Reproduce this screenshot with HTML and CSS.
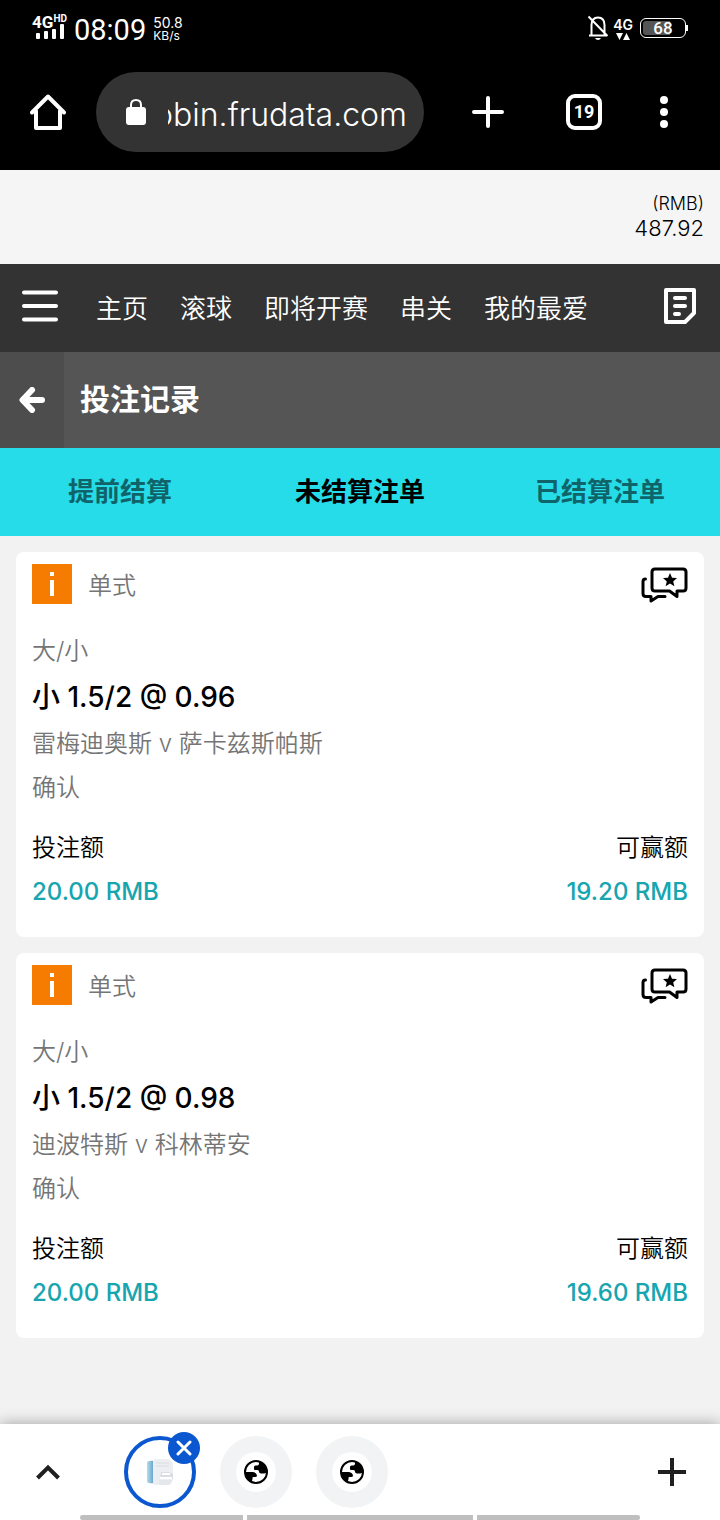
FILE: index.html
```html
<!DOCTYPE html>
<html lang="zh-CN">
<head>
<meta charset="utf-8">
<meta name="viewport" content="width=device-width, initial-scale=1">
<title>投注记录</title>
<link rel="stylesheet" href="styles.css">
</head>
<body>
<svg class="sprite" aria-hidden="true">
  <symbol id="chat" viewBox="0 0 48 36">
    <path d="M15 2H43Q46 2 46 5V21Q46 24 43 24H37V29.500L29.500 24H15Q12 24 12 21V5Q12 2 15 2Z" fill="none" stroke="#000" stroke-width="3" stroke-linejoin="round"/>
    <path d="M5.500 12Q3 12 3 14.500V26.500Q3 29.500 6 29.500H11V34L18 29.500H25" fill="none" stroke="#000" stroke-width="3" stroke-linecap="round" stroke-linejoin="round"/>
    <path d="M30 6l2 4.700 5 .4-3.800 3.300 1.200 4.900-4.400-2.700-4.400 2.700 1.200-4.900-3.800-3.300 5-.4z"/>
  </symbol>
  <symbol id="globe" viewBox="0 0 24 24">
    <circle cx="12" cy="12" r="11" fill="#fff" stroke="#000" stroke-width="2"/>
    <path d="M15 1.500V4Q14.500 5.500 13 5.500H11.500Q10 5.500 10 7V9Q10 10 11 10H13.500Q15 10 15 11.500Q15 13.500 17 13.500H20Q22 13 23 12C23 6.500 20 3 15 1.500Z"/>
    <path d="M1 12H9Q12.500 12.500 13 15.500Q13 17 11 17H9.500Q8.500 17 8.500 18V19Q8 20 8 22C4 20.500 1 17 1 12Z"/>
  </symbol>
</svg>

<header class="browser">
  <div class="status">
    <div class="status-side">
      <div class="signal">
        <span class="net">4G<sup>HD</sup></span>
        <svg width="30" height="15" viewBox="0 0 30 15" fill="#fff"><rect x="1" y="9" width="4" height="6" rx="1"/><rect x="9" y="7" width="4" height="8" rx="1"/><rect x="17" y="5" width="4" height="10" rx="1"/><rect x="25" y="0" width="4" height="15" rx="1"/></svg>
      </div>
      <time class="clock">08:09</time>
      <div class="speed"><span>50.8</span><span class="unit">KB/s</span></div>
    </div>
    <div class="status-side status-right">
      <svg width="22" height="26" viewBox="0 0 22 26" fill="none" stroke="#fff" stroke-width="2"><path d="M2 20.500H20M4.500 20V10Q4.500 2.500 11 2.500Q17.500 2.500 17.500 10V20M1.500 1.500L20.500 21"/><path d="M8 23h6q-1 2-3 2t-3-2z" fill="#fff" stroke="none"/></svg>
      <div class="data"><span>4G</span><svg width="14" height="7" viewBox="0 0 14 7" fill="#fff"><path d="M0 0h7L3.500 7zM7 7h7L10.500 0z"/></svg></div>
      <div class="battery"><span class="level">68</span></div>
    </div>
  </div>
  <div class="toolbar">
    <button class="tool home" aria-label="主页"><svg width="36" height="38" viewBox="0 0 36 38" fill="none" stroke="#fff" stroke-width="4" stroke-linecap="round" stroke-linejoin="round"><path d="M2 19.500L18 3.500L34 19.500M6 18V35H30V18" /></svg></button>
    <div class="address">
      <svg width="20" height="26" viewBox="0 0 20 26"><rect x="0" y="8" width="20" height="18" rx="3" fill="#fff"/><path d="M5 9V6Q5 1 10 1T15 6V9" fill="none" stroke="#fff" stroke-width="2"/></svg>
      <input class="url" type="text" aria-label="网址" value="obin.frudata.com" readonly>
    </div>
    <button class="tool" aria-label="新标签页"><svg width="32" height="32" viewBox="0 0 32 32" stroke="#fff" stroke-width="4" stroke-linecap="round"><path d="M16 2V30M2 16H30"/></svg></button>
    <button class="tool" aria-label="标签页"><span class="tab-count">19</span></button>
    <button class="tool more" aria-label="更多"><svg width="8" height="32" viewBox="0 0 8 32" fill="#fff"><circle cx="4" cy="4" r="4"/><circle cx="4" cy="16" r="4"/><circle cx="4" cy="28" r="4"/></svg></button>
  </div>
</header>

<div class="account"><span class="currency">(RMB)</span><span class="balance">487.92</span></div>

<nav class="nav">
  <button class="icon-button" aria-label="菜单"><svg width="36" height="32" viewBox="0 0 36 32" stroke="#fff" stroke-width="4" stroke-linecap="round"><path d="M2 2.500H34M2 16H34M2 29.500H34"/></svg></button>
  <div class="links"><a href="#">主页</a><a href="#">滚球</a><a href="#">即将开赛</a><a href="#">串关</a><a href="#">我的最爱</a></div>
  <button class="icon-button" aria-label="注单"><svg width="32" height="36" viewBox="0 0 32 36" fill="none" stroke="#fff" stroke-width="4"><path d="M2 2H30V25L21 34H2Z" stroke-linejoin="round"/><path d="M11 10H21M11 18H21M11 26H15" stroke-linecap="round"/></svg></button>
</nav>

<div class="heading">
  <button class="back" aria-label="返回"><svg width="26" height="26" viewBox="0 0 26 26" fill="none" stroke="#fff" stroke-width="6" stroke-linecap="round" stroke-linejoin="round"><path d="M13 3L3.500 13L13 23M4 13H23"/></svg></button>
  <h1>投注记录</h1>
</div>

<div class="tabs" role="tablist">
  <button role="tab" aria-selected="false">提前结算</button>
  <button role="tab" aria-selected="true">未结算注单</button>
  <button role="tab" aria-selected="false">已结算注单</button>
</div>

<main class="bets">
  <article class="card">
    <header class="card-head">
      <button class="info" aria-label="详情"><svg width="40" height="40" viewBox="0 0 40 40" fill="#fff"><path d="M18 8h4v4h-4zM18 16h4v16h-4z"/></svg></button>
      <span class="kind">单式</span>
      <button class="chat" aria-label="分享"><svg width="48" height="36"><use href="#chat"/></svg></button>
    </header>
    <p>大/小</p>
    <h2>小 1.5/2 @ 0.96</h2>
    <p>雷梅迪奥斯 v 萨卡兹斯帕斯</p>
    <p>确认</p>
    <dl class="amounts">
      <div><dt>投注额</dt><dd>20.00 RMB</dd></div>
      <div><dt>可赢额</dt><dd>19.20 RMB</dd></div>
    </dl>
  </article>
  <article class="card">
    <header class="card-head">
      <button class="info" aria-label="详情"><svg width="40" height="40" viewBox="0 0 40 40" fill="#fff"><path d="M18 8h4v4h-4zM18 16h4v16h-4z"/></svg></button>
      <span class="kind">单式</span>
      <button class="chat" aria-label="分享"><svg width="48" height="36"><use href="#chat"/></svg></button>
    </header>
    <p>大/小</p>
    <h2>小 1.5/2 @ 0.98</h2>
    <p>迪波特斯 v 科林蒂安</p>
    <p>确认</p>
    <dl class="amounts">
      <div><dt>投注额</dt><dd>20.00 RMB</dd></div>
      <div><dt>可赢额</dt><dd>19.60 RMB</dd></div>
    </dl>
  </article>
</main>

<footer class="bottom">
  <div class="bottom-row">
    <button class="tool expand" aria-label="展开"><svg width="24" height="16" viewBox="0 0 24 16" fill="none" stroke="#202020" stroke-width="4"><path d="M1.500 14L12 3.500L22.500 14"/></svg></button>
    <div class="sites">
      <div class="site-wrap">
        <button class="site current" aria-label="当前标签页"><svg width="28" height="28" viewBox="0 0 28 28">
          <defs><linearGradient id="spine"><stop offset="0" stop-color="#b9d9ea"/><stop offset="1" stop-color="#68aacf"/></linearGradient></defs>
          <rect x="4" y="1" width="23" height="26" rx="6" fill="#eceef1"/>
          <path d="M1 4Q4 2 7 3V25Q3 26 1 24Z" fill="url(#spine)"/>
          <path d="M10 5H23M10 8H23" stroke="#d8dde3"/>
          <path d="M15 14h8l4 2v5H14z" fill="#d9dde3"/><path d="M16 16h8M14 20h12" stroke="#fff" stroke-width="2"/><path d="M13 22h13l-2 5H13z" fill="#e4e7eb"/>
        </svg></button>
        <button class="close" aria-label="关闭"><svg width="16" height="16" viewBox="0 0 16 16" stroke="#fff" stroke-width="3" stroke-linecap="round"><path d="M2 2L14 14M14 2L2 14"/></svg></button>
      </div>
      <button class="site" aria-label="标签页 2"><span class="disc"><svg width="24" height="24"><use href="#globe"/></svg></span></button>
      <button class="site" aria-label="标签页 3"><span class="disc"><svg width="24" height="24"><use href="#globe"/></svg></span></button>
    </div>
    <button class="tool" aria-label="新建标签页"><svg width="28" height="28" viewBox="0 0 28 28" stroke="#202020" stroke-width="4"><path d="M14 0V28M0 14H28"/></svg></button>
  </div>
  <div class="gesture"><i></i><i></i><i></i></div>
</footer>
</body>
</html>
```
FILE: styles.css
```css
* { box-sizing: border-box; }
body {
  margin: 0;
  min-height: 100vh;
  display: flex;
  flex-direction: column;
  background: #f2f2f2;
  color: #000;
  font-family: Inter, "Noto Sans CJK SC", sans-serif;
  font-size: 24px;
}
button {
  display: flex;
  align-items: center;
  justify-content: center;
  padding: 0;
  border: 0;
  background: none;
  color: inherit;
  font: inherit;
}
svg { display: block; flex: none; }
.sprite { position: absolute; width: 0; height: 0; }
h1, h2, p, dl, dd { margin: 0; }

.browser { background: #000; color: #fff; }
.status {
  display: flex;
  justify-content: space-between;
  align-items: center;
  height: 56px;
  padding: 0 34px 0 32px;
}
.status-side { display: flex; align-items: center; gap: 7px; }
.signal { display: flex; flex-direction: column; align-items: center; width: 35px; padding-bottom: 4px; }
.signal svg { margin-top: -6px; }
.net { display: flex; font-family: Roboto, sans-serif; font-size: 17px; font-weight: 700; line-height: 16px; }
.net sup { font-size: 10px; line-height: 10px; }
.clock { padding-top: 4px; font-family: Roboto, sans-serif; font-size: 29px; line-height: 32px; }
.speed { display: flex; flex-direction: column; padding-top: 2px; font-size: 14px; line-height: 13px; }
.speed .unit { font-size: 12px; }
.status-right { gap: 4px; }
.data { display: flex; flex-direction: column; align-items: center; font-size: 14px; font-weight: 600; line-height: 16px; }
.battery {
  position: relative;
  width: 46px;
  height: 20px;
  margin-left: 3px;
  padding: 2px;
  border: 1px solid #fff;
  border-radius: 6px;
}
.battery::after {
  content: "";
  position: absolute;
  right: -3px;
  top: 6px;
  width: 2px;
  height: 6px;
  background: #fff;
}
.level {
  display: block;
  border-radius: 3px;
  background: linear-gradient(90deg, #555 68%, transparent 68%);
  font-family: Roboto, sans-serif;
  font-size: 17px;
  font-weight: 500;
  line-height: 14px;
  text-align: center;
}

.toolbar { display: flex; align-items: center; height: 114px; padding-bottom: 2px; }
.tool { flex: none; width: 96px; height: 80px; }
.toolbar .more { width: 64px; margin-right: 24px; }
.address {
  display: flex;
  align-items: center;
  gap: 22px;
  flex: 1;
  min-width: 0;
  height: 80px;
  margin-right: 16px;
  padding: 0 17px 0 30px;
  border-radius: 40px;
  background: #333;
}
.url {
  flex: 1;
  min-width: 0;
  height: 48px;
  padding: 4px 0 0;
  border: 0;
  outline: 0;
  background: none;
  color: #fff;
  direction: rtl;
  font-family: Inter, sans-serif;
  font-size: 32px;
  font-weight: 300;
}
.tab-count {
  width: 36px;
  height: 36px;
  border: 4px solid #fff;
  border-radius: 9px;
  font-family: Roboto, sans-serif;
  font-size: 18px;
  font-weight: 700;
  line-height: 28px;
}

.account {
  display: flex;
  flex-direction: column;
  align-items: flex-end;
  height: 94px;
  padding: 22px 16px 0;
  background: #f5f5f5;
  font-weight: 300;
}
.currency { font-size: 18px; line-height: 24px; }
.balance { font-size: 22px; line-height: 24px; }

.nav {
  display: flex;
  align-items: center;
  height: 88px;
  padding-bottom: 4px;
  background: #333;
  color: #fff;
}
.icon-button { flex: none; width: 80px; height: 84px; }
.links { display: flex; flex: 1; gap: 32px; padding-left: 16px; font-size: 26px; font-weight: 350; }
.links a { color: inherit; text-decoration: none; white-space: nowrap; }

.heading { display: flex; align-items: center; height: 96px; background: #555; color: #fff; }
.back { width: 64px; height: 96px; background: #4d4d4d; }
.heading h1 { padding: 0 0 6px 16px; font-size: 30px; font-weight: 700; }

.tabs { display: grid; grid-template-columns: repeat(3, 1fr); height: 88px; background: #25dce8; }
.tabs button { padding-bottom: 6px; color: #106369; font-size: 26px; font-weight: 700; }
.tabs button[aria-selected="true"] { color: #000; }

.bets { display: flex; flex: 1; flex-direction: column; gap: 16px; padding: 16px; }
.card { padding: 12px 16px 23px; border-radius: 8px; background: #fff; color: #757575; font-weight: 350; line-height: 44px; }
.card-head { display: flex; align-items: center; gap: 16px; height: 40px; margin-bottom: 25px; }
.kind { padding-top: 4px; }
.info { width: 40px; height: 40px; background: #f57c00; }
.chat { margin-left: auto; padding-top: 2px; }
.card h2 { color: #000; font-size: 28px; font-weight: 500; line-height: 49px; }
.amounts { display: flex; justify-content: space-between; margin-top: 16px; color: #000; }
.amounts div:last-child { text-align: right; }
.amounts dd { color: #17a5b0; font-weight: 500; }

.bottom { height: 96px; background: #fff; box-shadow: 0 0 14px rgba(0, 0, 0, .35); }
.bottom-row { display: flex; align-items: center; height: 91px; padding-top: 5px; }
.sites { display: flex; flex: 1; gap: 24px; padding-left: 28px; }
.site-wrap { position: relative; }
.site { width: 72px; height: 72px; border-radius: 50%; background: #f1f3f4; }
.site.current { border: 4px solid #0b57d0; background: #fff; }
.disc { display: flex; padding: 8px; border-radius: 50%; background: #fff; }
.close {
  position: absolute;
  top: -4px;
  right: -4px;
  width: 32px;
  height: 32px;
  border-radius: 50%;
  background: #0b57d0;
}
.gesture { display: grid; grid-template-columns: 163fr 226fr 163fr; gap: 4px; height: 5px; padding: 0 80px; }
.gesture i { background: #bfbfbf; }
.gesture i:first-child { border-radius: 3px 0 0 3px; }
.gesture i:last-child { border-radius: 0 3px 3px 0; }
```
